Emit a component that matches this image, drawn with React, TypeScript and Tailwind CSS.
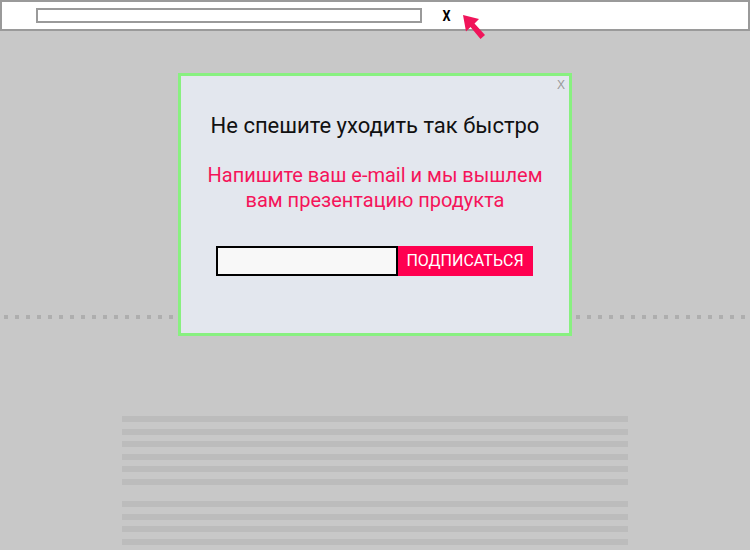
const lineGroups = [6, 4];

function TextLines({ count }: { count: number }) {
  return (
    <div className="flex flex-col gap-[6.6px]">
      {Array.from({ length: count }).map((_, i) => (
        <div key={i} className="h-[6px] w-[506px] bg-[#bcbcbc]" />
      ))}
    </div>
  );
}

export default function App() {
  return (
    <div className="relative w-[750px] h-[550px] overflow-hidden bg-[#c8c8c8] font-['Roboto','Liberation_Sans',sans-serif]">
      {/* Browser bar */}
      <div className="relative flex items-center h-[31px] bg-white border-2 border-[#9a9a9a]">
        <div className="ml-[34px] w-[386px] h-[15px] border-2 border-[#9a9a9a] bg-white" />
        <span className="ml-[20px] text-[14px] font-bold leading-none text-black scale-x-90">X</span>
        <svg className="absolute left-[459px] top-[11px]" width="28" height="30" viewBox="0 0 28 30">
          <path d="M2 2 L18 6 L13.5 10.5 L24 22 L19.5 26 L9.5 14 L5 18.5 Z" fill="#f0145a" />
        </svg>
      </div>

      {/* Page content */}
      <div className="flex flex-col">
        <div className="mt-[284px] ml-[4px] h-[4px] bg-[repeating-linear-gradient(to_right,#aeaeae_0_4px,transparent_4px_11px)]" />
        <div className="mt-[97px] ml-[122px] flex flex-col gap-[16px]">
          {lineGroups.map((n, i) => (
            <TextLines key={i} count={n} />
          ))}
        </div>
      </div>

      {/* Exit popup */}
      <div className="absolute left-[178px] top-[73px] w-[394px] h-[263px] bg-[#e3e7ee] border-[3px] border-[#88f080] flex flex-col items-center">
        <span className="absolute right-[4px] top-[2px] text-[12px] leading-[14px] text-[#999] font-['Liberation_Sans',sans-serif]">
          X
        </span>
        <h2 className="mt-[37px] text-[22px] leading-[26px] text-[#111]">Не спешите уходить так быстро</h2>
        <p className="mt-[24px] text-[20px] leading-[25px] text-[#f5145a] text-center">
          Напишите ваш e-mail и мы вышлем
          <br />
          вам презентацию продукта
        </p>
        <div className="mt-[33px] pr-[2px] flex">
          <div className="w-[182px] h-[30px] border-2 border-black bg-[#f8f8f8]" />
          <button className="w-[135px] h-[30px] bg-[#ff0050] text-white text-[16px] leading-none">
            ПОДПИСАТЬСЯ
          </button>
        </div>
      </div>
    </div>
  );
}
